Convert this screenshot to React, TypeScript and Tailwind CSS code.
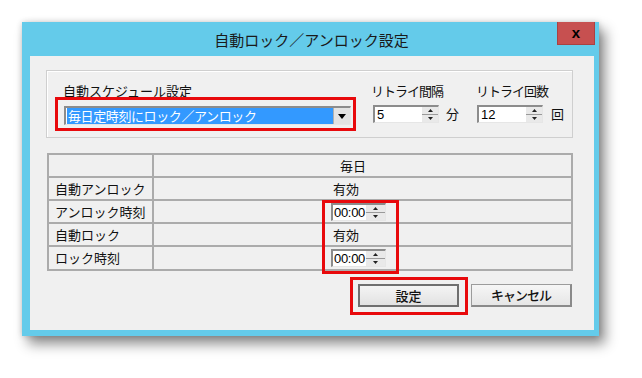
import React from "react";

function Arrow({ up }: { up: boolean }) {
  return (
    <svg width="5" height="3" viewBox="0 0 5 3">
      {up ? <path d="M0 3 L2.5 0 L5 3Z" fill="#222" /> : <path d="M0 0 L2.5 3 L5 0Z" fill="#222" />}
    </svg>
  );
}

function SpinArrows({ w }: { w: string }) {
  return (
    <div className={`flex flex-col ${w} h-full`}>
      <div className="flex-1 flex items-center justify-center bg-[#e9e9e9] border-b border-[#9a9a9a]">
        <Arrow up />
      </div>
      <div className="flex-1 flex items-center justify-center bg-[#e9e9e9]">
        <Arrow up={false} />
      </div>
    </div>
  );
}

function Sunken({ className, children }: { className: string; children: React.ReactNode }) {
  return (
    <div
      className={`${className} border-t-2 border-l-2 border-t-[#8c8c8c] border-l-[#8c8c8c] border-b border-r border-b-[#e6e6e6] border-r-[#e6e6e6] bg-white flex items-stretch`}
    >
      {children}
    </div>
  );
}

function Spinner({ value }: { value: string }) {
  return (
    <Sunken className="w-[66px] h-[18px]">
      <div className="flex-1 pl-[2px] text-[13px] leading-[15px] font-['Liberation_Sans',sans-serif] text-black">{value}</div>
      <SpinArrows w="w-[16px]" />
    </Sunken>
  );
}

function TimeSpinner() {
  return (
    <Sunken className="w-[55px] h-[18px]">
      <div className="flex-1 pl-[1px] text-[13px] leading-[15px] font-['Liberation_Sans',sans-serif] text-black tracking-[-0.3px]">00:00</div>
      <SpinArrows w="w-[19px]" />
    </Sunken>
  );
}

function Row({ label, children, last }: { label: string; children: React.ReactNode; last?: boolean }) {
  return (
    <div className={`flex ${last ? "h-[22px]" : "h-[23px] border-b-2 border-[#ababab]"}`}>
      <div className="w-[105px] border-r-2 border-[#ababab] flex items-center pl-[6px] text-[13px] leading-[16px]">{label}</div>
      <div className="flex-1 flex items-center pl-[177px] text-[13px] leading-[16px]">{children}</div>
    </div>
  );
}

export default function App() {
  return (
    <div className="w-[642px] h-[378px] bg-white overflow-hidden font-['Noto_Sans_CJK_JP','Noto_Sans',sans-serif] text-[#111]">
      <div className="ml-[22px] mt-[22px] w-[577px] h-[314px] bg-[#64cbea] flex flex-col shadow-[6px_8px_12px_rgba(0,0,0,0.45),0_0_6px_rgba(0,0,0,0.18)]">
        {/* title bar */}
        <div className="relative h-[34px] flex items-center justify-center">
          <span className="text-[15px] leading-[18px] text-[#1a1a1a] pl-[2px] pt-[1px]">自動ロック／アンロック設定</span>
          <div className="absolute right-[4px] top-0 w-[38px] h-[23px] bg-[#c75050] border border-[#a94242] border-t-0 flex items-center justify-center">
            <span className="text-[15px] leading-[15px] font-bold text-black font-['Liberation_Sans',sans-serif] -mt-[2px]">x</span>
          </div>
        </div>
        {/* content */}
        <div className="ml-[8px] mr-[5px] mb-[6px] flex-1 bg-[#f0f0f0] pt-[14px] pl-[16px] flex flex-col">
          {/* group box */}
          <div className="w-[527px] h-[68px] border border-[#cfcfcf] shadow-[inset_1px_1px_0_#ffffff] flex pl-[16px] pt-[12px]">
            <div className="w-[308px] flex flex-col">
              <div className="text-[13px] leading-[16px]">自動スケジュール設定</div>
              <div className="relative mt-[7px] ml-[1px] w-[287px] h-[19px]">
                <Sunken className="w-[287px] h-[19px]">
                  <div className="flex-1 flex items-stretch pl-[1px]">
                    <div className="w-full bg-[#3399ff] text-white text-[13px] leading-[16px] pl-[1px] whitespace-nowrap tracking-[-0.4px]">
                      毎日定時刻にロック／アンロック
                    </div>
                  </div>
                  <div className="w-[17px] bg-[#e3e3e3] border-l border-[#b0b0b0] flex items-center justify-center">
                    <svg width="8" height="5" viewBox="0 0 8 5">
                      <path d="M0 0 L8 0 L4 5Z" fill="#000" />
                    </svg>
                  </div>
                </Sunken>
                <div className="absolute -left-[9px] -top-[9px] w-[301px] h-[34px] border-[3px] border-[#e8090c]" />
              </div>
            </div>
            <div className="w-[105px] flex flex-col">
              <div className="text-[13px] leading-[16px] tracking-[-1px]">リトライ間隔</div>
              <div className="mt-[6px] ml-[2px] flex items-center gap-[7px]">
                <Spinner value="5" />
                <span className="text-[13px] leading-[16px]">分</span>
              </div>
            </div>
            <div className="flex flex-col">
              <div className="text-[13px] leading-[16px] tracking-[-1px]">リトライ回数</div>
              <div className="mt-[6px] ml-[1px] flex items-center gap-[8px]">
                <Spinner value="12" />
                <span className="text-[13px] leading-[16px]">回</span>
              </div>
            </div>
          </div>
          {/* table */}
          <div className="relative mt-[15px] ml-[1px] w-[526px] border-2 border-[#ababab] flex flex-col">
            <div className="flex h-[23px] border-b-2 border-[#ababab]">
              <div className="w-[105px] border-r-2 border-[#ababab]" />
              <div className="flex-1 flex items-center pl-[186px] text-[13px] leading-[16px]">毎日</div>
            </div>
            <Row label="自動アンロック">
              <span className="pl-[2px]">有効</span>
            </Row>
            <Row label="アンロック時刻">
              <TimeSpinner />
            </Row>
            <Row label="自動ロック">
              <span className="pl-[2px]">有効</span>
            </Row>
            <Row label="ロック時刻" last>
              <TimeSpinner />
            </Row>
            <div className="absolute left-[273px] top-[45px] w-[77px] h-[74px] border-[3px] border-[#e8090c]" />
          </div>
          {/* buttons */}
          <div className="mt-[13px] ml-[312px] flex gap-[12px]">
            <div className="relative">
              <div className="w-[101px] h-[23px] border-2 border-[#6f6f6f] bg-gradient-to-b from-[#f4f4f4] to-[#e2e2e2] flex items-center justify-center text-[13px] leading-[16px] font-medium">
                設定
              </div>
              <div className="absolute -left-[8px] -top-[7px] w-[118px] h-[38px] border-[3px] border-[#e8090c]" />
            </div>
            <div className="w-[101px] h-[23px] border border-[#9c9c9c] border-b-2 border-r-2 border-b-[#8a8a8a] border-r-[#8a8a8a] bg-gradient-to-b from-[#f6f6f6] to-[#e6e6e6] flex items-center justify-center text-[13px] leading-[16px] font-medium tracking-[-1px]">
              キャンセル
            </div>
          </div>
        </div>
      </div>
    </div>
  );
}
